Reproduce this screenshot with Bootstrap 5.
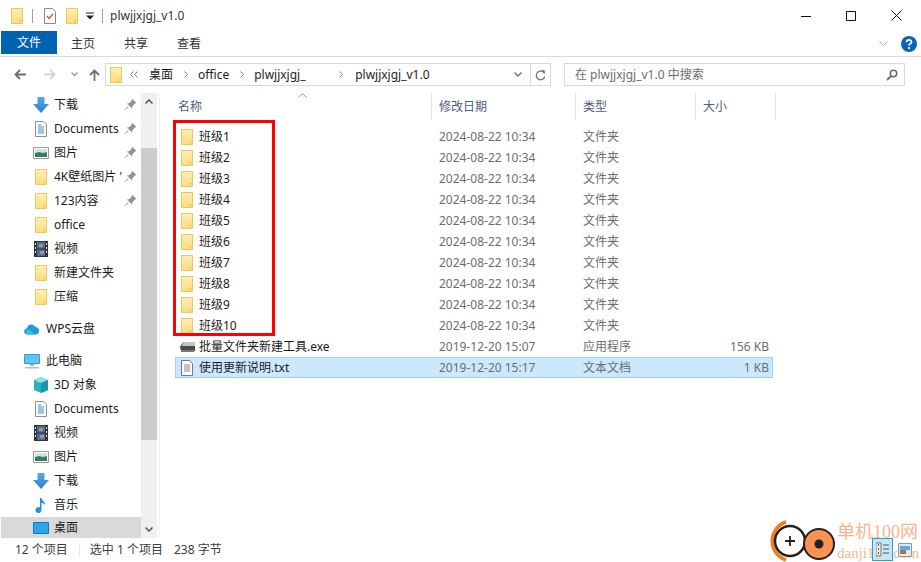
<!DOCTYPE html>
<html lang="zh"><head><meta charset="utf-8"><title>plwjjxjgj_v1.0</title>
<link href="https://cdn.jsdelivr.net/npm/bootstrap@5.3.0/dist/css/bootstrap.min.css" rel="stylesheet">
<style>
html,body{height:562px;width:921px;overflow:hidden;background:#fff}
body{font:12px/16px "Noto Sans","Noto Sans CJK SC",sans-serif;color:#1c1c1c;position:relative}
svg{display:block;flex:none}
.title-row{height:31px;padding-left:11px}
.tsep{width:1px;height:14px;background:#a0a0a0}
.ml9{margin-left:9px}.ml10{margin-left:10px}.ml8{margin-left:8px}.ml11{margin-left:11px}
.title-text{margin-left:7px;color:#333}
.win-ctl{margin-left:auto;width:120px;padding-right:19px;gap:35px;justify-content:flex-end}
.tab-row{border-bottom:1px solid #dadbdc;padding-left:1px;box-sizing:content-box;height:25px;align-items:flex-start}
.file-tab{width:56px;height:23px;background:#0063b1;color:#fff;text-align:center;line-height:24px}
.rib-tab{line-height:25px;color:#333}
.nav-row{height:36px;padding:6px 0 7px 14px}
.addr{width:446px;height:23px;border:1px solid #d9d9d9;margin-left:5px;padding-left:4px;color:#1c1c1c}
.addr-end{margin-left:auto;width:20px;height:21px;border-left:1px solid #d9d9d9;justify-content:center}
.search{width:341px;height:23px;border:1px solid #d9d9d9;margin-left:13px;padding:0 6px 0 10px;color:#6d6d6d;justify-content:space-between}
.body-row{height:445px}
.side{width:141px;height:445px;overflow:hidden;padding-top:0}
.side-item{height:24px;white-space:nowrap;position:relative}
.lv2{padding-left:33px}.lv1{padding-left:24px}
.lv2 svg{margin-right:5px}.lv1 svg{margin-right:6px}
.side-label{width:68px;overflow:hidden}
.pin{position:absolute;left:125px;top:5px}
.side-cur{background:#d9d9d9;height:21px;margin-left:1px;padding:1px 0 0 32px}
.sgap{height:8px}
.sbar{width:16px;height:445px;background:#f0f0f0;flex-direction:column;justify-content:space-between;align-items:center}
.sbar-wrap{position:relative}
.sthumb{position:absolute;left:0;top:55px;width:16px;height:292px;background:#cdcdcd}
.sbtn{height:17px;justify-content:center}
.pane-sep{width:1px;background:#efefef;height:445px;margin-left:2px}
.pane{flex:1;padding-left:15px;position:relative}
.heads{height:27px;color:#4c607a;position:relative}
.hc{height:27px;padding-left:7px;border-right:1px solid #e5e5e5;line-height:27px}
.w1{width:260px;margin-left:-3px;padding-left:6px}.w2{width:144px}.w3{width:120px}.w4{width:80px}
.sort-mark{position:absolute;left:123px;top:0}
.rows{padding-top:6px}
.frow{height:21px;width:598px;border:1px solid transparent;white-space:nowrap;color:#6d6d6d}
.frow.on{background:#cce8ff;border-color:#99d1ff}
.c-name{width:263px;padding-left:5px;color:#1c1c1c}
.c-name svg{margin-right:6px}
.c-name svg.exe-ico{margin:0 4px 0 -1px}
.c-date{width:144px}.c-type{width:120px}.c-size{width:66px;text-align:right}
.redbox{position:absolute;left:13px;top:27px;width:102px;height:216px;border:3px solid #f00;pointer-events:none}
.status{height:24px;padding-left:15px;color:#3c3c3c}
.stsep{width:1px;height:14px;background:#e8e8e8;margin:0 10px 0 11px}
.mark-logo{position:absolute;left:770px;top:518px}
.mark-t1{position:absolute;left:837px;top:521px;font:18px/22px "Liberation Serif","Noto Sans CJK SC",serif;color:#f9b48f;white-space:nowrap}
.mark-t2{position:absolute;left:837px;top:544px;font:15px/18px "Liberation Serif",serif;color:#f9b48f;white-space:nowrap}
.vtile{position:absolute;left:872px;top:538px;width:21px;height:23px;background:#c6e6f6;border:1px solid #2a9fd6;padding:3px}
.vtile2{position:absolute;left:898px;top:543px}
</style></head><body>
<svg width="0" height="0" style="position:absolute"><defs>
<linearGradient id="fg" x1="0" y1="0" x2="0" y2="1"><stop offset="0" stop-color="#fdeeb8"/><stop offset="1" stop-color="#fcdc7c"/></linearGradient>
<linearGradient id="ag" x1="0" y1="0" x2="0" y2="1"><stop offset="0" stop-color="#5aa9ea"/><stop offset="1" stop-color="#2b7fd0"/></linearGradient>
<symbol id="fd" viewBox="0 0 12 16"><path d="M.5.5h11v15H.5z" fill="url(#fg)" stroke="#ebc75c"/><path d="M9 15.500v-3h2.500" fill="none" stroke="#ebc75c"/></symbol>
<symbol id="dl" viewBox="0 0 16 16"><path d="M4.500 0h7v7H16l-8 9-8-9h4.500z" fill="url(#ag)"/></symbol>
<symbol id="doc" viewBox="0 0 12 16"><path d="M.5.5h8l3 3v12H.5z" fill="#fff" stroke="#8a8f96"/><path d="M3 4h3M3 6h6M3 8h6M3 10h6M3 12h6" stroke="#3a8dd0"/></symbol>
<symbol id="pic" viewBox="0 0 16 12"><path d="M.5.5h15v11H.5z" fill="#fff" stroke="#9a9a9a"/><path d="M2 2h12v4H2z" fill="#cfe3ef"/><path d="M2 6l4-1 4 1 4-1v5H2z" fill="#3f7a62"/></symbol>
<symbol id="film" viewBox="0 0 14 16"><path d="M0 0h14v16H0z" fill="#333"/><path d="M3 1h8v6.500H3z" fill="#3d6fb5"/><path d="M3 8.500h8V15H3z" fill="#3d6fb5"/><path d="M5 3h4v3H5zM6 10h4v3H6z" fill="#c8913a"/><path d="M1 2h1v2H1zM1 6h1v2H1zM1 10h1v2H1zM12 2h1v2h-1zM12 6h1v2h-1zM12 10h1v2h-1z" fill="#ddd"/></symbol>
<symbol id="pin" viewBox="0 0 12 12"><path d="M7 .5l4.500 4.500-1.500.5-2.500 2.500-.5 2.500-5-5 2.500-.5L7 2z" fill="#8b949c"/><path d="M3 8.500L.5 11.500" stroke="#8b949c"/></symbol>
</defs></svg>

<div class="title-row d-flex align-items-center">
<svg width="12" height="16"><use href="#fd"/></svg>
<div class="tsep ml9"></div>
<svg class="ml11" width="12" height="16" viewBox="0 0 12 16"><path d="M.5.5h8l3 3v12H.5z" fill="#fff" stroke="#888"/><path d="M3 8l2 2.500L9 6" fill="none" stroke="#e0532a" stroke-width="1.300"/></svg>
<svg class="ml10" width="12" height="16"><use href="#fd"/></svg>
<svg class="ml8" width="8" height="8" viewBox="0 0 8 8"><path d="M0 1h8" stroke="#222"/><path d="M0 3.500h8L4 7.500z" fill="#222"/></svg>
<div class="tsep ml8"></div>
<div class="title-text ml8">plwjjxjgj_v1.0</div>
<div class="win-ctl d-flex align-items-center">
<svg width="10" height="10" viewBox="0 0 10 10"><path d="M0 5.500h10" stroke="#111"/></svg>
<svg width="10" height="10" viewBox="0 0 10 10"><path d="M.5.500h9v9h-9z" fill="none" stroke="#111"/></svg>
<svg width="11" height="11" viewBox="0 0 11 11"><path d="M.5.500l10 10M10.500.500l-10 10" stroke="#111"/></svg>
</div>
</div>

<div class="tab-row d-flex">
<div class="file-tab">文件</div>
<div class="rib-tab" style="margin-left:14px">主页</div>
<div class="rib-tab" style="margin-left:29px">共享</div>
<div class="rib-tab" style="margin-left:29px">查看</div>
<div class="ms-auto d-flex align-items-center" style="height:26px;padding-right:4px;gap:13px">
<svg width="9" height="6" viewBox="0 0 9 6"><path d="M.5.500l4 4 4-4" fill="none" stroke="#a8a8a8"/></svg>
<svg width="16" height="16" viewBox="0 0 16 16"><circle cx="8" cy="8" r="8" fill="#0c64b8"/><path d="M5.600 6.200c0-3 4.900-3 4.900-.2 0 1.900-2.500 1.700-2.500 3.600" fill="none" stroke="#fff" stroke-width="1.800"/><path d="M7 11h2v2H7z" fill="#fff"/></svg>
</div>
</div>

<div class="nav-row d-flex align-items-center">
<svg width="12" height="11" viewBox="0 0 12 11"><path d="M12 5.500H2M6 1L1.500 5.500 6 10" fill="none" stroke="#6e6e6e" stroke-width="1.800"/></svg>
<svg style="margin-left:18px" width="12" height="11" viewBox="0 0 12 11"><path d="M0 5.500h10M6 1l4.500 4.500L6 10" fill="none" stroke="#d4d4d4" stroke-width="1.800"/></svg>
<svg style="margin-left:15px" width="7" height="5" viewBox="0 0 7 5"><path d="M.5.500l3 3 3-3" fill="none" stroke="#9a9a9a" stroke-width="1.300"/></svg>
<svg style="margin-left:11px" width="11" height="12" viewBox="0 0 11 12"><path d="M5.500 12V2M1 6l4.500-4.500L10 6" fill="none" stroke="#6e6e6e" stroke-width="1.800"/></svg>
<div class="addr d-flex align-items-center">
<svg width="12" height="16"><use href="#fd"/></svg>
<svg style="margin-left:8px" width="8" height="7" viewBox="0 0 8 7"><path d="M3.500.500l-3 3 3 3M7.500.500l-3 3 3 3" fill="none" stroke="#7a7a7a"/></svg>
<span style="margin-left:11px">桌面</span>
<svg style="margin-left:11px" width="4" height="7" viewBox="0 0 4 7"><path d="M.5.500l3 3-3 3" fill="none" stroke="#7a7a7a"/></svg>
<span style="margin-left:10px">office</span>
<svg style="margin-left:11px" width="4" height="7" viewBox="0 0 4 7"><path d="M.5.500l3 3-3 3" fill="none" stroke="#7a7a7a"/></svg>
<span style="margin-left:10px;width:62px">plwjjxjgj_</span>
<svg style="margin-left:23px" width="4" height="7" viewBox="0 0 4 7"><path d="M.5.500l3 3-3 3" fill="none" stroke="#7a7a7a"/></svg>
<span style="margin-left:12px">plwjjxjgj_v1.0</span>
<svg class="ms-auto" style="margin-right:3px" width="8" height="5" viewBox="0 0 8 5"><path d="M.5.500l3.500 3.500L7.500.500" fill="none" stroke="#6e6e6e" stroke-width="1.300"/></svg>
<div class="addr-end d-flex align-items-center" style="margin-left:5px">
<svg width="11" height="12" viewBox="0 0 11 12"><path d="M9.500 4.500A4.300 4.300 0 1 0 9.800 7.500" fill="none" stroke="#777" stroke-width="1.400"/><path d="M6 .5l3.800 1v3.500z" fill="#777"/></svg>
</div>
</div>
<div class="search d-flex align-items-center">
<span>在 plwjjxjgj_v1.0 中搜索</span>
<svg width="12" height="12" viewBox="0 0 12 12"><circle cx="7.500" cy="4.500" r="3.200" fill="none" stroke="#666" stroke-width="1.500"/><path d="M5 7L1 11" stroke="#8a6a50" stroke-width="2"/></svg>
</div>
</div>

<div class="body-row d-flex">
<div class="side">
<div class="side-item lv2 d-flex align-items-center"><svg width="16" height="16"><use href="#dl"/></svg><span class="side-label">下载</span><svg class="pin" width="12" height="12"><use href="#pin"/></svg></div>
<div class="side-item lv2 d-flex align-items-center"><svg width="16" height="16" style="padding:0 2px"><use href="#doc"/></svg><span>Documents</span><svg class="pin" width="12" height="12"><use href="#pin"/></svg></div>
<div class="side-item lv2 d-flex align-items-center"><svg width="16" height="12"><use href="#pic"/></svg><span>图片</span><svg class="pin" width="12" height="12"><use href="#pin"/></svg></div>
<div class="side-item lv2 d-flex align-items-center"><svg width="16" height="16" style="padding:0 2px"><use href="#fd"/></svg><span class="side-label">4K壁纸图片 '</span><svg class="pin" width="12" height="12"><use href="#pin"/></svg></div>
<div class="side-item lv2 d-flex align-items-center"><svg width="16" height="16" style="padding:0 2px"><use href="#fd"/></svg><span>123内容</span><svg class="pin" width="12" height="12"><use href="#pin"/></svg></div>
<div class="side-item lv2 d-flex align-items-center"><svg width="16" height="16" style="padding:0 2px"><use href="#fd"/></svg><span>office</span></div>
<div class="side-item lv2 d-flex align-items-center"><svg width="16" height="16" style="padding:0 1px"><use href="#film"/></svg><span>视频</span></div>
<div class="side-item lv2 d-flex align-items-center"><svg width="16" height="16" style="padding:0 2px"><use href="#fd"/></svg><span>新建文件夹</span></div>
<div class="side-item lv2 d-flex align-items-center"><svg width="16" height="16" style="padding:0 2px"><use href="#fd"/></svg><span>压缩</span></div>
<div class="sgap"></div>
<div class="side-item lv1 d-flex align-items-center"><svg width="16" height="12" viewBox="0 0 16 12"><path d="M3.500 11.500a3 3 0 0 1-.5-6 4.500 4.500 0 0 1 8.500-1.500 3.800 3.800 0 0 1 .5 7.500z" fill="#1f9be0"/><path d="M3 11.500a3 3 0 0 1 1-5c3 0 4 4 8 5z" fill="#2fc6d6"/></svg><span>WPS云盘</span></div>
<div class="sgap"></div>
<div class="side-item lv1 d-flex align-items-center"><svg width="16" height="16" viewBox="0 0 16 16"><path d="M.5 1.500h15v9H.5z" fill="#5ec6f5" stroke="#3a9ad8"/><path d="M6 11h4v2H6z" fill="#9fb8c8"/><path d="M1 14h14v1.500H1z" fill="#a9bccb"/></svg><span>此电脑</span></div>
<div class="side-item lv2 d-flex align-items-center"><svg width="16" height="16" viewBox="0 0 16 16"><path d="M8 0l7 3v10l-7 3-7-3V3z" fill="#27b2c4"/><path d="M8 0l7 3-7 3-7-3z" fill="#8ee4ea"/><path d="M8 6l7-3v10l-7 3z" fill="#1b93ae"/></svg><span>3D 对象</span></div>
<div class="side-item lv2 d-flex align-items-center"><svg width="16" height="16" style="padding:0 2px"><use href="#doc"/></svg><span>Documents</span></div>
<div class="side-item lv2 d-flex align-items-center"><svg width="16" height="16" style="padding:0 1px"><use href="#film"/></svg><span>视频</span></div>
<div class="side-item lv2 d-flex align-items-center"><svg width="16" height="12"><use href="#pic"/></svg><span>图片</span></div>
<div class="side-item lv2 d-flex align-items-center"><svg width="16" height="16"><use href="#dl"/></svg><span>下载</span></div>
<div class="side-item lv2 d-flex align-items-center"><svg width="16" height="16" viewBox="0 0 16 16"><path d="M7 1h1.500c.5 3 4 3.500 3.500 7-1-1.500-2-2-3.500-2v7a3 3 0 1 1-1.500-2.500z" fill="#1f8fe0"/></svg><span>音乐</span></div>
<div class="side-cur side-item d-flex align-items-center"><svg width="16" height="12" viewBox="0 0 16 12" style="margin-right:5px"><path d="M.5.500h15v11H.5z" fill="#2aa7ea" stroke="#1477bd"/></svg><span>桌面</span></div>
</div>
<div class="sbar-wrap">
<div class="sbar d-flex">
<div class="sbtn d-flex align-items-center"><svg width="8" height="5" viewBox="0 0 8 5"><path d="M.5 4.500L4 1l3.500 3.500" fill="none" stroke="#555" stroke-width="1.500"/></svg></div>
<div class="sbtn d-flex align-items-center"><svg width="8" height="5" viewBox="0 0 8 5"><path d="M.5.500L4 4 7.500.500" fill="none" stroke="#555" stroke-width="1.500"/></svg></div>
</div>
<div class="sthumb"></div>
</div>
<div class="pane-sep"></div>
<div class="pane">
<div class="heads d-flex">
<div class="hc w1">名称</div><div class="hc w2">修改日期</div><div class="hc w3">类型</div><div class="hc w4">大小</div>
<svg class="sort-mark" width="9" height="5" viewBox="0 0 9 5"><path d="M.5 4.500l4-4 4 4" fill="none" stroke="#a0a0a0"/></svg>
</div>
<div class="rows" id="rows"></div>
<div class="redbox"></div>
</div>
</div>

<div class="status d-flex align-items-center"><span>12 个项目</span><div class="stsep"></div><span>选中 1 个项目</span><span style="margin-left:11px">238 字节</span></div>

<svg class="mark-logo" width="66" height="44" viewBox="770 518 66 44">
<path d="M786 522A20 20 0 0 0 786 560" fill="none" stroke="#f57a18" stroke-width="3.500"/>
<circle cx="790" cy="541" r="15" fill="#fff" stroke="#222" stroke-width="2.500"/>
<path d="M785 541h10M790 536v10" stroke="#222" stroke-width="1.800"/>
<circle cx="819" cy="544" r="15" fill="#fa9350" stroke="#222" stroke-width="2"/>
<circle cx="819" cy="544" r="4.500" fill="#222"/>
</svg>
<div class="mark-t1">单机100网</div>
<div class="mark-t2">danji100.com</div>
<div class="vtile"><svg width="13" height="15" viewBox="0 0 13 15"><path d="M0 1h5v13H0z" fill="#eee" stroke="#777"/><path d="M2 3h1M2 7h1M2 11h1" stroke="#555" stroke-width="2"/><path d="M7 3h6M7 7h6M7 11h6" stroke="#555"/></svg></div>
<svg class="vtile2" width="14" height="15" viewBox="0 0 14 15"><path d="M.5.500h13v13H.5z" fill="#ddeaf5" stroke="#8a9aa8"/><path d="M2 3h10v4H2z" fill="#5da8e8"/><path d="M2 7h6v4H2z" fill="#a07a40"/></svg>

<script>
var rows=document.getElementById('rows'),h='';
for(var i=1;i<=10;i++){h+='<div class="frow d-flex align-items-center"><div class="c-name d-flex align-items-center"><svg width="12" height="16"><use href="#fd"/></svg><span>班级'+i+'</span></div><div class="c-date">2024-08-22 10:34</div><div class="c-type">文件夹</div><div class="c-size"></div></div>';}
h+='<div class="frow d-flex align-items-center"><div class="c-name d-flex align-items-center"><svg class="exe-ico" width="15" height="12" viewBox="0 0 15 12"><path d="M0 6l3-5h12v9H1z" fill="#4a4a4a"/><path d="M3 1h12v4H2z" fill="#c4c4c4"/><path d="M1 9h13v2H1z" fill="#777"/></svg><span>批量文件夹新建工具.exe</span></div><div class="c-date">2019-12-20 15:07</div><div class="c-type">应用程序</div><div class="c-size">156 KB</div></div>';
h+='<div class="frow on d-flex align-items-center"><div class="c-name d-flex align-items-center"><svg width="12" height="16" viewBox="0 0 12 16"><path d="M.5.500h8l3 3v12H.5z" fill="#fff" stroke="#777"/><path d="M3 5h6M3 7h6M3 9h6M3 11h6" stroke="#888"/></svg><span>使用更新说明.txt</span></div><div class="c-date">2019-12-20 15:17</div><div class="c-type">文本文档</div><div class="c-size">1 KB</div></div>';
rows.innerHTML=h;
</script>
<script src="https://cdn.jsdelivr.net/npm/bootstrap@5.3.0/dist/js/bootstrap.bundle.min.js"></script>
</body></html>
